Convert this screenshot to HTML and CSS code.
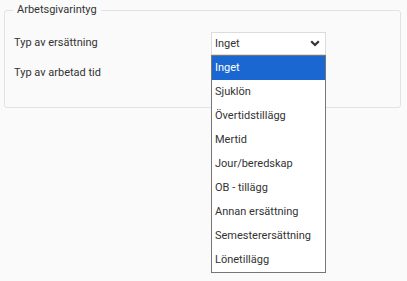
FILE: index.html
```html
<!DOCTYPE html>
<html lang="sv">
<head>
<meta charset="utf-8">
<title>Arbetsgivarintyg</title>
<link rel="stylesheet" href="styles.css">
</head>
<body>
<section class="group">
  <h2 class="group-title">Arbetsgivarintyg</h2>
  <div class="rows">
    <div class="row">
      <span class="label">Typ av ersättning</span>
      <div class="select-wrap">
        <div class="select">
          <span class="select-value">Inget</span>
          <svg class="chevron" width="10" height="7" viewBox="0 0 10 7"><path d="M1.2 1.2 L5 5 L8.8 1.2" fill="none" stroke="#333" stroke-width="2.2"/></svg>
        </div>
        <ul class="listbox">
          <li class="option selected">Inget</li>
          <li class="option">Sjuklön</li>
          <li class="option">Övertidstillägg</li>
          <li class="option">Mertid</li>
          <li class="option">Jour/beredskap</li>
          <li class="option">OB - tillägg</li>
          <li class="option">Annan ersättning</li>
          <li class="option">Semesterersättning</li>
          <li class="option">Lönetillägg</li>
        </ul>
      </div>
    </div>
    <div class="row">
      <span class="label">Typ av arbetad tid</span>
    </div>
  </div>
</section>
</body>
</html>
```
FILE: styles.css
```css
html, body {
  margin: 0;
  padding: 0;
  background: #fafafa;
}
body {
  min-height: 281px;
  font-family: Roboto, "Liberation Sans", sans-serif;
  font-size: 11px;
  color: #333;
  overflow: hidden;
}
.group {
  position: relative;
  margin: 10px 6px 0 4px;
  border: 1px solid #e2e2e2;
  border-radius: 3px;
  padding: 21px 9px 23px 9px;
}
.group-title {
  position: absolute;
  top: -8px;
  left: 8px;
  margin: 0;
  padding: 0 4px;
  background: #fafafa;
  line-height: 14px;
  font-size: 11px;
  font-weight: normal;
  color: #333;
}
.rows {
  display: flex;
  flex-direction: column;
  gap: 8px;
}
.row {
  display: grid;
  grid-template-columns: 197px 115px;
  height: 22px;
  align-items: center;
}
.label {
  line-height: 14px;
}
.select-wrap {
  position: relative;
  height: 22px;
}
.select {
  box-sizing: border-box;
  height: 23px;
  width: 115px;
  background: #fff;
  border: 1px solid #dcdcdc;
  display: flex;
  align-items: center;
  justify-content: space-between;
  padding: 0 5px 0 3px;
}
.chevron {
  display: block;
}
.listbox {
  position: absolute;
  left: 0;
  top: 23px;
  width: 115px;
  box-sizing: border-box;
  margin: 0;
  padding: 0;
  list-style: none;
  background: #fff;
  border: 1px solid #767676;
  z-index: 2;
}
.option {
  height: 24px;
  line-height: 24px;
  padding-left: 3px;
  color: #333;
  white-space: nowrap;
}
.option.selected {
  background: #1a67d2;
  color: #fff;
}
```
